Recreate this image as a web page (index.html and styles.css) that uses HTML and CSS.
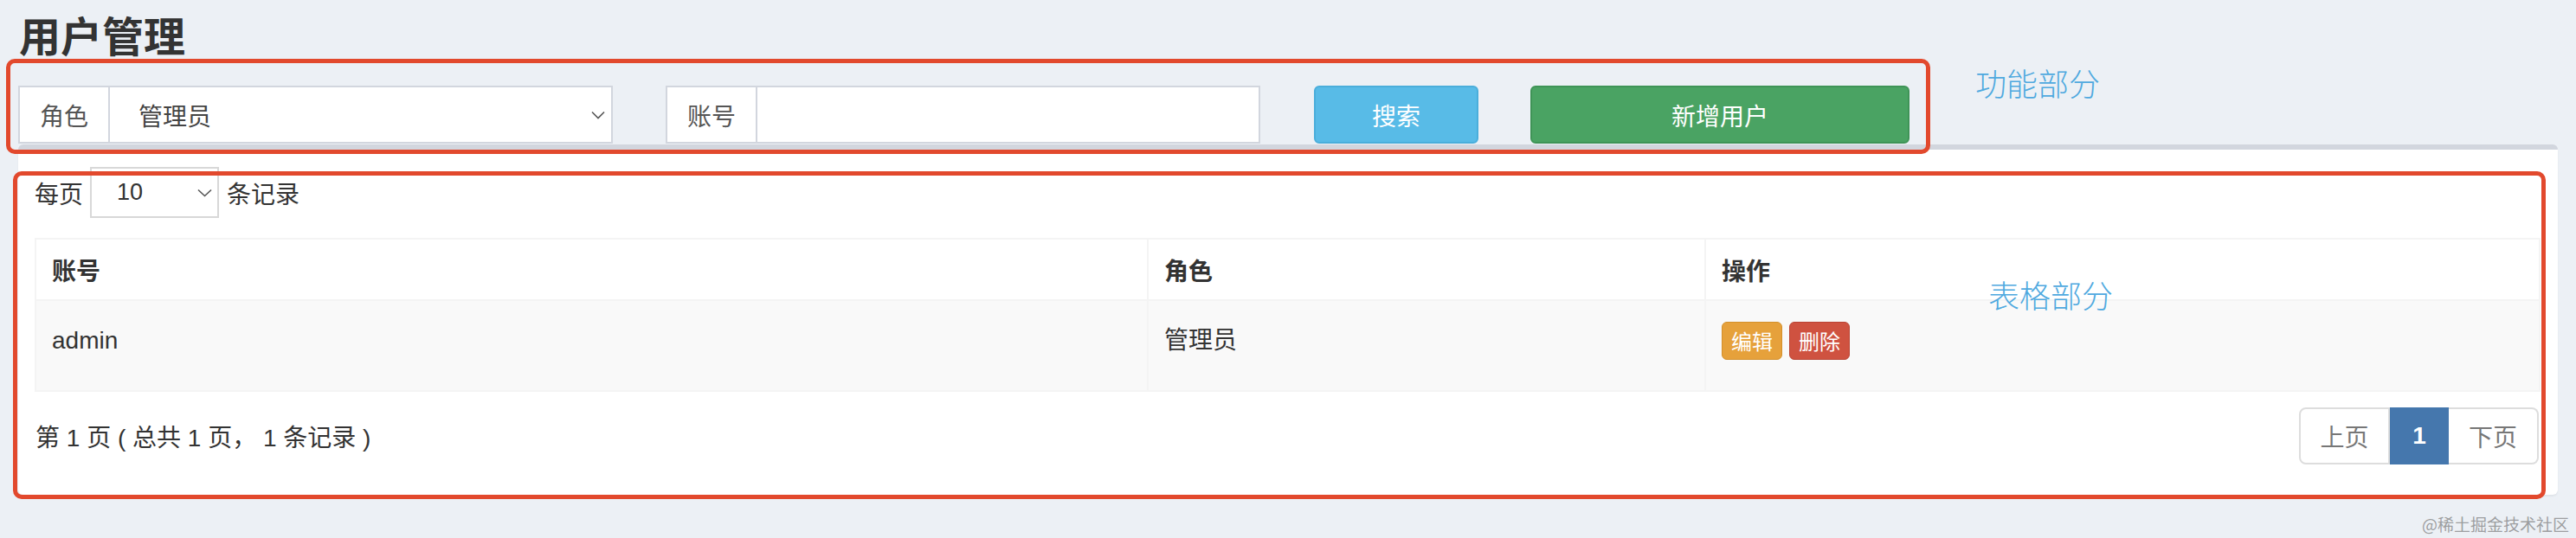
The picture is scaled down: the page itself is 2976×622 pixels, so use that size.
FILE: index.html
```html
<!DOCTYPE html>
<html lang="zh-CN">
<head>
<meta charset="utf-8">
<title>用户管理</title>
<link rel="stylesheet" href="styles.css">
</head>
<body>
<div class="page">
  <h1 class="title">用户管理</h1>

  <div class="toolbar">
    <div class="input-group role-group">
      <span class="addon">角色</span>
      <div class="select-box">
        <span class="select-value">管理员</span>
        <svg class="chevron" width="16" height="10" viewBox="0 0 16 10"><polyline points="1,1.5 8,8.5 15,1.5" fill="none" stroke="#555" stroke-width="1.6"/></svg>
      </div>
    </div>
    <div class="input-group account-group">
      <span class="addon">账号</span>
      <div class="text-input"></div>
    </div>
    <button class="btn btn-search">搜索</button>
    <button class="btn btn-add">新增用户</button>
  </div>

  <div class="box">
    <div class="length-row">
      <span>每页</span>
      <div class="small-select">
        <span>10</span>
        <svg class="chevron" width="17" height="10" viewBox="0 0 17 10"><polyline points="1,1.5 8.5,8.5 16,1.5" fill="none" stroke="#555" stroke-width="1.6"/></svg>
      </div>
      <span class="after-select">条记录</span>
    </div>

    <table class="data-table">
      <colgroup>
        <col class="col-account">
        <col class="col-role">
        <col class="col-action">
      </colgroup>
      <thead>
        <tr><th>账号</th><th>角色</th><th>操作</th></tr>
      </thead>
      <tbody>
        <tr>
          <td>admin</td>
          <td>管理员</td>
          <td><span class="mini-btn btn-edit">编辑</span><span class="mini-btn btn-del">删除</span></td>
        </tr>
      </tbody>
    </table>

    <div class="footer-row">
      <span class="info">第 1 页 ( 总共 1 页， 1 条记录 )</span>
      <ul class="pagination">
        <li class="page-item first">上页</li>
        <li class="page-item active">1</li>
        <li class="page-item last">下页</li>
      </ul>
    </div>
  </div>

  <div class="annot annot-func"></div>
  <div class="annot annot-table"></div>
  <span class="annot-label label-func">功能部分</span>
  <span class="annot-label label-table">表格部分</span>
  <span class="watermark">@稀土掘金技术社区</span>
</div>
</body>
</html>
```

FILE: styles.css
```css
html, body {
  margin: 0;
  padding: 0;
}

body {
  width: 2976px;
  height: 622px;
  overflow: hidden;
  background: #ecf0f5;
  font-family: "Liberation Sans", "Noto Sans CJK SC", sans-serif;
  font-size: 28px;
  color: #333;
}

.page {
  position: relative;
  height: 622px;
  box-sizing: border-box;
  padding: 11px 21px 0;
}

.title {
  margin: 0;
  padding-left: 1px;
  font-family: "Noto Sans CJK SC", sans-serif;
  font-size: 48px;
  line-height: 56px;
  font-weight: 700;
  color: #333;
}

/* toolbar */
.toolbar {
  display: flex;
  align-items: stretch;
  height: 67px;
  margin-top: 32px;
}

.input-group {
  display: flex;
  width: 687px;
  height: 67px;
  box-sizing: border-box;
  border: 2px solid #d2d6de;
  background: #fff;
}

.account-group {
  margin-left: 61px;
}

.addon {
  width: 104px;
  box-sizing: border-box;
  border-right: 2px solid #d2d6de;
  display: flex;
  align-items: center;
  justify-content: center;
  color: #555;
  font-family: "Noto Sans CJK SC", sans-serif;
}

.select-box {
  flex: 1;
  display: flex;
  align-items: center;
  justify-content: space-between;
  padding: 0 7px 0 33px;
  color: #444;
}

.text-input {
  flex: 1;
}

.btn {
  height: 67px;
  box-sizing: border-box;
  border-radius: 6px;
  color: #fff;
  font-family: "Noto Sans CJK SC", sans-serif;
  font-size: 28px;
  padding: 0;
  cursor: pointer;
}

.btn-search {
  margin-left: 62px;
  width: 190px;
  background: #58bbe7;
  border: 2px solid #4aaedb;
}

.btn-add {
  margin-left: 60px;
  width: 438px;
  background: #4aa363;
  border: 2px solid #3f9457;
}

/* box */
.box {
  margin-top: 1px;
  background: #fff;
  border-top: 6px solid #d2d6de;
  border-radius: 6px;
  box-shadow: 0 2px 2px rgba(0, 0, 0, 0.05);
  padding: 20px 22px 35px 19px;
}

.length-row {
  display: flex;
  align-items: center;
  height: 59px;
  font-family: "Noto Sans CJK SC", sans-serif;
}

.small-select {
  display: flex;
  align-items: center;
  justify-content: space-between;
  width: 149px;
  height: 59px;
  box-sizing: border-box;
  margin-left: 8px;
  border: 2px solid #d8d8d8;
  padding: 0 6px 0 29px;
  font-family: "Liberation Sans", sans-serif;
  font-size: 27px;
}

.after-select {
  margin-left: 9px;
}

.data-table {
  width: 2893px;
  margin-top: 23px;
  border-collapse: collapse;
  table-layout: fixed;
}

.col-account { width: 1285px; }
.col-role { width: 644px; }
.col-action { width: 964px; }

.data-table th,
.data-table td {
  border: 2px solid #f4f4f4;
  text-align: left;
  padding: 0 18px;
}

.data-table th {
  height: 69px;
  font-family: "Noto Sans CJK SC", sans-serif;
  font-weight: 700;
  color: #333;
  vertical-align: middle;
}

.data-table tbody tr {
  background: #f9f9f9;
}

.data-table td {
  padding: 24px 18px 35px;
  line-height: 44px;
  vertical-align: top;
  color: #333;
}

.mini-btn {
  display: inline-flex;
  align-items: center;
  justify-content: center;
  height: 44px;
  box-sizing: border-box;
  padding: 0 10px;
  border-radius: 6px;
  font-family: "Noto Sans CJK SC", sans-serif;
  font-size: 24px;
  color: #fff;
  vertical-align: top;
}

.btn-edit {
  background: #e6a13b;
  border: 1px solid #d4902b;
  margin-right: 8px;
}

.btn-del {
  background: #cf5240;
  border: 1px solid #b94434;
}

.footer-row {
  display: flex;
  align-items: center;
  justify-content: space-between;
  margin-top: 18px;
  height: 66px;
}

.info {
  padding-left: 1px;
  color: #333;
}

.pagination {
  display: flex;
  list-style: none;
  margin: 0;
  padding: 0;
  height: 66px;
}

.page-item {
  display: flex;
  align-items: center;
  justify-content: center;
  box-sizing: border-box;
  height: 66px;
  border: 2px solid #ddd;
  color: #777;
  font-family: "Noto Sans CJK SC", sans-serif;
  background: #fff;
}

.page-item.first {
  width: 105px;
  border-radius: 8px 0 0 8px;
}

.page-item.active {
  width: 68px;
  background: #4577ad;
  border-color: #4577ad;
  color: #fff;
  font-family: "Liberation Sans", sans-serif;
  font-weight: 700;
}

.page-item.last {
  width: 104px;
  border-left: none;
  border-radius: 0 8px 8px 0;
}

/* annotations overlaid on the screenshot */
.annot {
  position: absolute;
  border: 5px solid #e2492d;
  border-radius: 10px;
  box-sizing: border-box;
  pointer-events: none;
}

.annot-func {
  left: 7px;
  top: 68px;
  width: 2223px;
  height: 110px;
}

.annot-table {
  left: 15px;
  top: 198px;
  width: 2926px;
  height: 379px;
}

.annot-label {
  position: absolute;
  font-family: "Noto Sans CJK SC", sans-serif;
  font-weight: 300;
  font-size: 36px;
  line-height: 36px;
  color: #4fa9df;
  white-space: nowrap;
}

.label-func {
  left: 2282px;
  top: 77px;
}

.label-table {
  left: 2297px;
  top: 322px;
}

.watermark {
  position: absolute;
  right: 8px;
  bottom: 5px;
  font-family: "Noto Sans CJK SC", sans-serif;
  font-size: 19px;
  line-height: 22px;
  color: rgba(110, 110, 110, 0.65);
}
```
